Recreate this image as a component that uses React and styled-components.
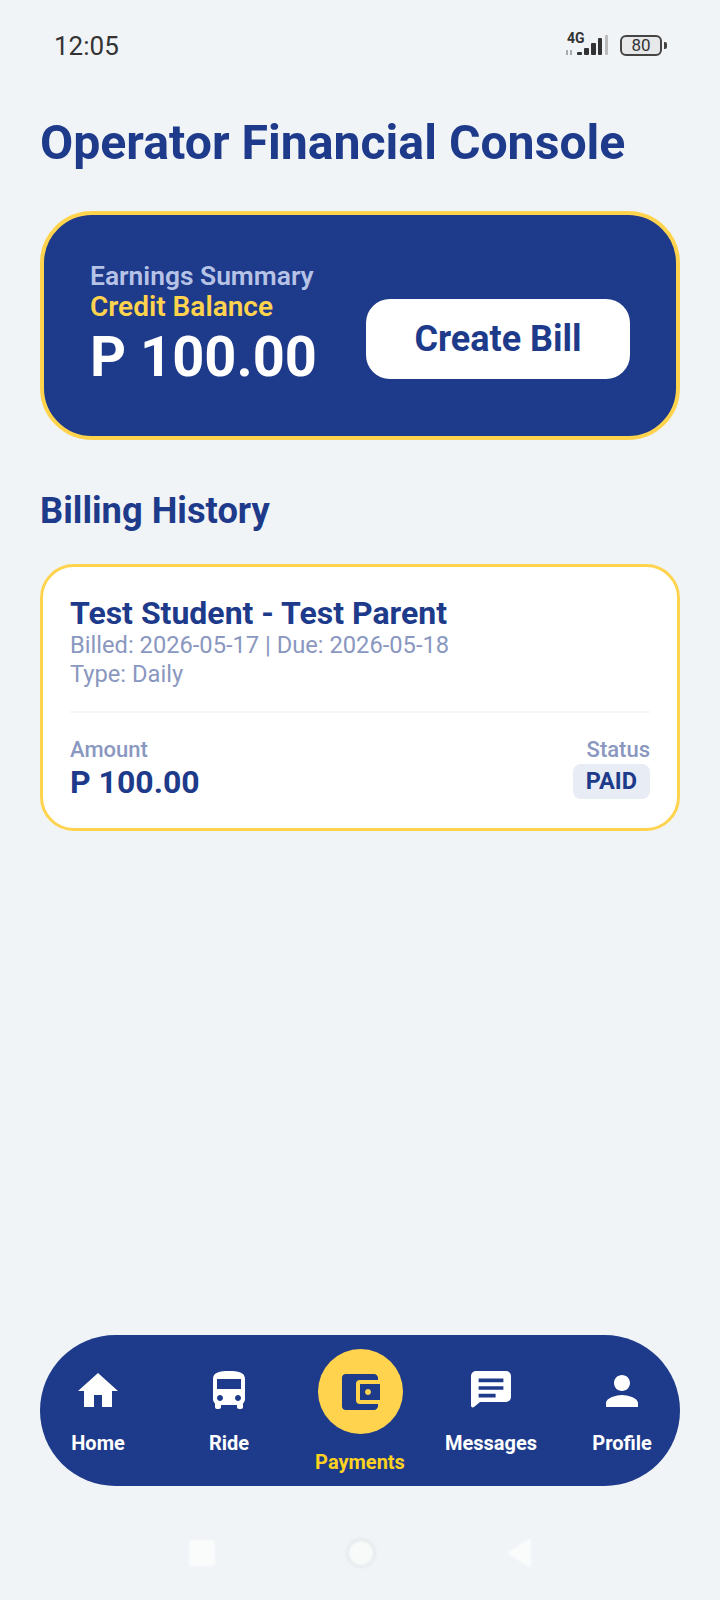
import React from "react";
import styled, { createGlobalStyle } from "styled-components";
import { MdHome, MdDirectionsBus, MdAccountBalanceWallet, MdPerson } from "react-icons/md";

const navy = "#1E3A8A";
const yellow = "#FFD34E";
const muted = "#8A97BF";

const GlobalStyle = createGlobalStyle`
  html, body { margin: 0; padding: 0; background: #F1F4F7; }
  * { box-sizing: border-box; }
  body { font-family: Roboto, "Liberation Sans", sans-serif; }
`;

// rounded chat bubble with a small tail, the md one has a sharp corner
const ChatIcon = ({ size }) => (
  <svg width={size} height={size} viewBox="0 0 24 24" fill="currentColor">
    <path
      fillRule="evenodd"
      d="M4.500 2h15A2.500 2.500 0 0 1 22 4.500v10.500a2.500 2.500 0 0 1-2.500 2.500H6.500L3.500 20C2.800 20.500 2 20 2 19.200V4.500A2.500 2.500 0 0 1 4.500 2zM5.800 5.800v1.800h12.400V5.800H5.800zm0 3.800v1.800h12.400V9.600H5.800zm0 3.800v1.800h8.500v-1.800H5.800z"
    />
  </svg>
);

const tabs = [
  { label: "Home", icon: MdHome },
  { label: "Ride", icon: MdDirectionsBus },
  { label: "Payments", icon: MdAccountBalanceWallet, active: true },
  { label: "Messages", icon: ChatIcon },
  { label: "Profile", icon: MdPerson },
];

const Signal = () => (
  <svg width="44" height="26" viewBox="0 0 44 26">
    <rect x="0" y="18" width="2" height="5" fill="#aaa" />
    <rect x="4" y="18" width="2" height="5" fill="#aaa" />
    <rect x="11" y="20" width="5" height="3" rx="1" fill="#333" />
    <rect x="18" y="16" width="5" height="7" rx="1" fill="#333" />
    <rect x="25" y="11" width="5" height="12" rx="1" fill="#333" />
    <rect x="32" y="6" width="4" height="17" rx="1" fill="#333" />
    <rect x="39" y="3" width="3" height="20" rx="1" fill="#bbb" />
  </svg>
);

const App = () => {
  return (
    <Page>
      <GlobalStyle />
      <StatusBar>
        <Time>12:05</Time>
        <StatusIcons>
          <SignalBox>
            <Network>4G</Network>
            <Signal />
          </SignalBox>
          <Battery>80</Battery>
          <BatteryTip />
        </StatusIcons>
      </StatusBar>

      <Title>Operator Financial Console</Title>

      <Hero>
        <HeroText>
          <HeroLabel>Earnings Summary</HeroLabel>
          <HeroSub>Credit Balance</HeroSub>
          <HeroAmount>P 100.00</HeroAmount>
        </HeroText>
        <CreateButton>Create Bill</CreateButton>
      </Hero>

      <SectionTitle>Billing History</SectionTitle>

      <BillCard>
        <BillName>Test Student - Test Parent</BillName>
        <BillMeta>Billed: 2026-05-17 | Due: 2026-05-18</BillMeta>
        <BillMeta>Type: Daily</BillMeta>
        <Divider />
        <BillFooter>
          <div>
            <FooterLabel>Amount</FooterLabel>
            <BillAmount>P 100.00</BillAmount>
          </div>
          <StatusCol>
            <FooterLabel>Status</FooterLabel>
            <Badge>PAID</Badge>
          </StatusCol>
        </BillFooter>
      </BillCard>

      <Nav>
        {tabs.map(({ label, icon: Icon, active }) => (
          <Tab key={label}>
            <IconSlot $active={active}>
              <Icon size={48} />
            </IconSlot>
            <TabLabel $active={active}>{label}</TabLabel>
          </Tab>
        ))}
      </Nav>

      <SystemBar>
        <SysSquare />
        <SysCircle />
        <SysBack />
      </SystemBar>
    </Page>
  );
};

const Page = styled.div`
  width: 720px;
  height: 1600px;
  padding: 0 40px;
  display: flex;
  flex-direction: column;
  background: #F1F4F7;
  overflow: hidden;
`;

const StatusBar = styled.div`
  height: 92px;
  padding: 0 13px 0 14px;
  display: flex;
  align-items: center;
  justify-content: space-between;
`;

const Time = styled.span`
  font-size: 26px;
  color: #333;
`;

const StatusIcons = styled.div`
  display: flex;
  align-items: center;
  margin-bottom: 2px;
`;

const SignalBox = styled.div`
  position: relative;
  width: 44px;
  height: 26px;
  margin-right: 10px;
`;

const Network = styled.span`
  position: absolute;
  left: 1px;
  top: -1px;
  font-size: 14px;
  line-height: 14px;
  font-weight: 700;
  color: #333;
`;

const Battery = styled.div`
  width: 42px;
  height: 21px;
  border: 2px solid #444;
  border-radius: 6px;
  background: #E6E8EA;
  font-size: 17px;
  line-height: 17px;
  color: #333;
  text-align: center;
`;

const BatteryTip = styled.div`
  width: 3px;
  height: 7px;
  margin-left: 2px;
  border-radius: 0 2px 2px 0;
  background: #444;
`;

const Title = styled.h1`
  margin: 23px 0 0;
  font-size: 48.2px;
  line-height: 56px;
  font-weight: 700;
  color: ${navy};
`;

const Hero = styled.div`
  margin-top: 40px;
  height: 229px;
  padding: 0 46px;
  display: flex;
  align-items: center;
  justify-content: space-between;
  background: ${navy};
  border: 4px solid ${yellow};
  border-radius: 52px;
`;

const HeroText = styled.div`
  display: flex;
  flex-direction: column;
`;

const HeroLabel = styled.span`
  font-size: 26.4px;
  line-height: 29px;
  font-weight: 600;
  color: #B6C3E6;
`;

const HeroSub = styled.span`
  font-size: 28px;
  line-height: 32px;
  margin-bottom: 2px;
  font-weight: 600;
  color: ${yellow};
`;

const HeroAmount = styled.span`
  font-size: 56px;
  line-height: 64px;
  font-weight: 700;
  color: #fff;
`;

const CreateButton = styled.button`
  width: 264px;
  height: 80px;
  margin-top: 26px;
  border: none;
  border-radius: 24px;
  background: #fff;
  font-family: inherit;
  font-size: 36px;
  font-weight: 700;
  color: ${navy};
`;

const SectionTitle = styled.h2`
  margin: 49px 0 0;
  font-size: 36.3px;
  line-height: 44px;
  font-weight: 700;
  color: ${navy};
`;

const BillCard = styled.div`
  margin-top: 31px;
  height: 267px;
  padding: 28px 27px 0;
  background: #fff;
  border: 3px solid ${yellow};
  border-radius: 34px;
`;

const BillName = styled.div`
  font-size: 32px;
  line-height: 36px;
  font-weight: 700;
  color: ${navy};
`;

const BillMeta = styled.div`
  font-size: 23.7px;
  line-height: 28.5px;
  color: ${muted};
`;

const Divider = styled.div`
  height: 2px;
  margin: 23px 0 23px;
  background: #F6F7F8;
`;

const BillFooter = styled.div`
  display: flex;
  justify-content: space-between;
`;

const StatusCol = styled.div`
  display: flex;
  flex-direction: column;
  align-items: flex-end;
`;

const FooterLabel = styled.div`
  font-size: 22px;
  line-height: 28px;
  font-weight: 500;
  color: ${muted};
`;

const BillAmount = styled.div`
  font-size: 32px;
  line-height: 36px;
  font-weight: 700;
  color: ${navy};
`;

const Badge = styled.div`
  padding: 0 13px;
  height: 35px;
  border-radius: 8px;
  background: #E8EDF5;
  font-size: 23.5px;
  line-height: 35px;
  font-weight: 700;
  color: ${navy};
`;

const Nav = styled.nav`
  margin-top: auto;
  height: 151px;
  padding-top: 14px;
  display: grid;
  grid-template-columns: repeat(5, 131px);
  justify-content: center;
  background: ${navy};
  border-radius: 76px;
`;

const Tab = styled.div`
  display: flex;
  flex-direction: column;
  align-items: center;
`;

const IconSlot = styled.div`
  width: 85px;
  height: ${(p) => (p.$active ? "85px" : "82px")};
  margin-bottom: ${(p) => (p.$active ? "16px" : "0")};
  padding-top: ${(p) => (p.$active ? "0" : "2px")};
  display: flex;
  align-items: center;
  justify-content: center;
  border-radius: 50%;
  background: ${(p) => (p.$active ? yellow : "transparent")};
  color: ${(p) => (p.$active ? navy : "#fff")};
`;

const TabLabel = styled.span`
  font-size: 20px;
  line-height: 24px;
  font-weight: 700;
  white-space: nowrap;
  color: ${(p) => (p.$active ? "#FFD21F" : "#fff")};
`;

const SystemBar = styled.div`
  height: 114px;
  padding-top: 20px;
  display: flex;
  align-items: center;
  justify-content: center;
  gap: 131px;
  filter: blur(1px);
`;

const SysSquare = styled.div`
  width: 26px;
  height: 26px;
  border-radius: 3px;
  background: #FAFCFC;
`;

const SysCircle = styled.div`
  width: 30px;
  height: 30px;
  border: 3px solid #E6EAEC;
  border-radius: 50%;
  background: #F8FAFA;
`;

const SysBack = styled.div`
  width: 0;
  height: 0;
  border-top: 15px solid transparent;
  border-bottom: 15px solid transparent;
  border-right: 24px solid #FAFCFC;
`;

export default App;
